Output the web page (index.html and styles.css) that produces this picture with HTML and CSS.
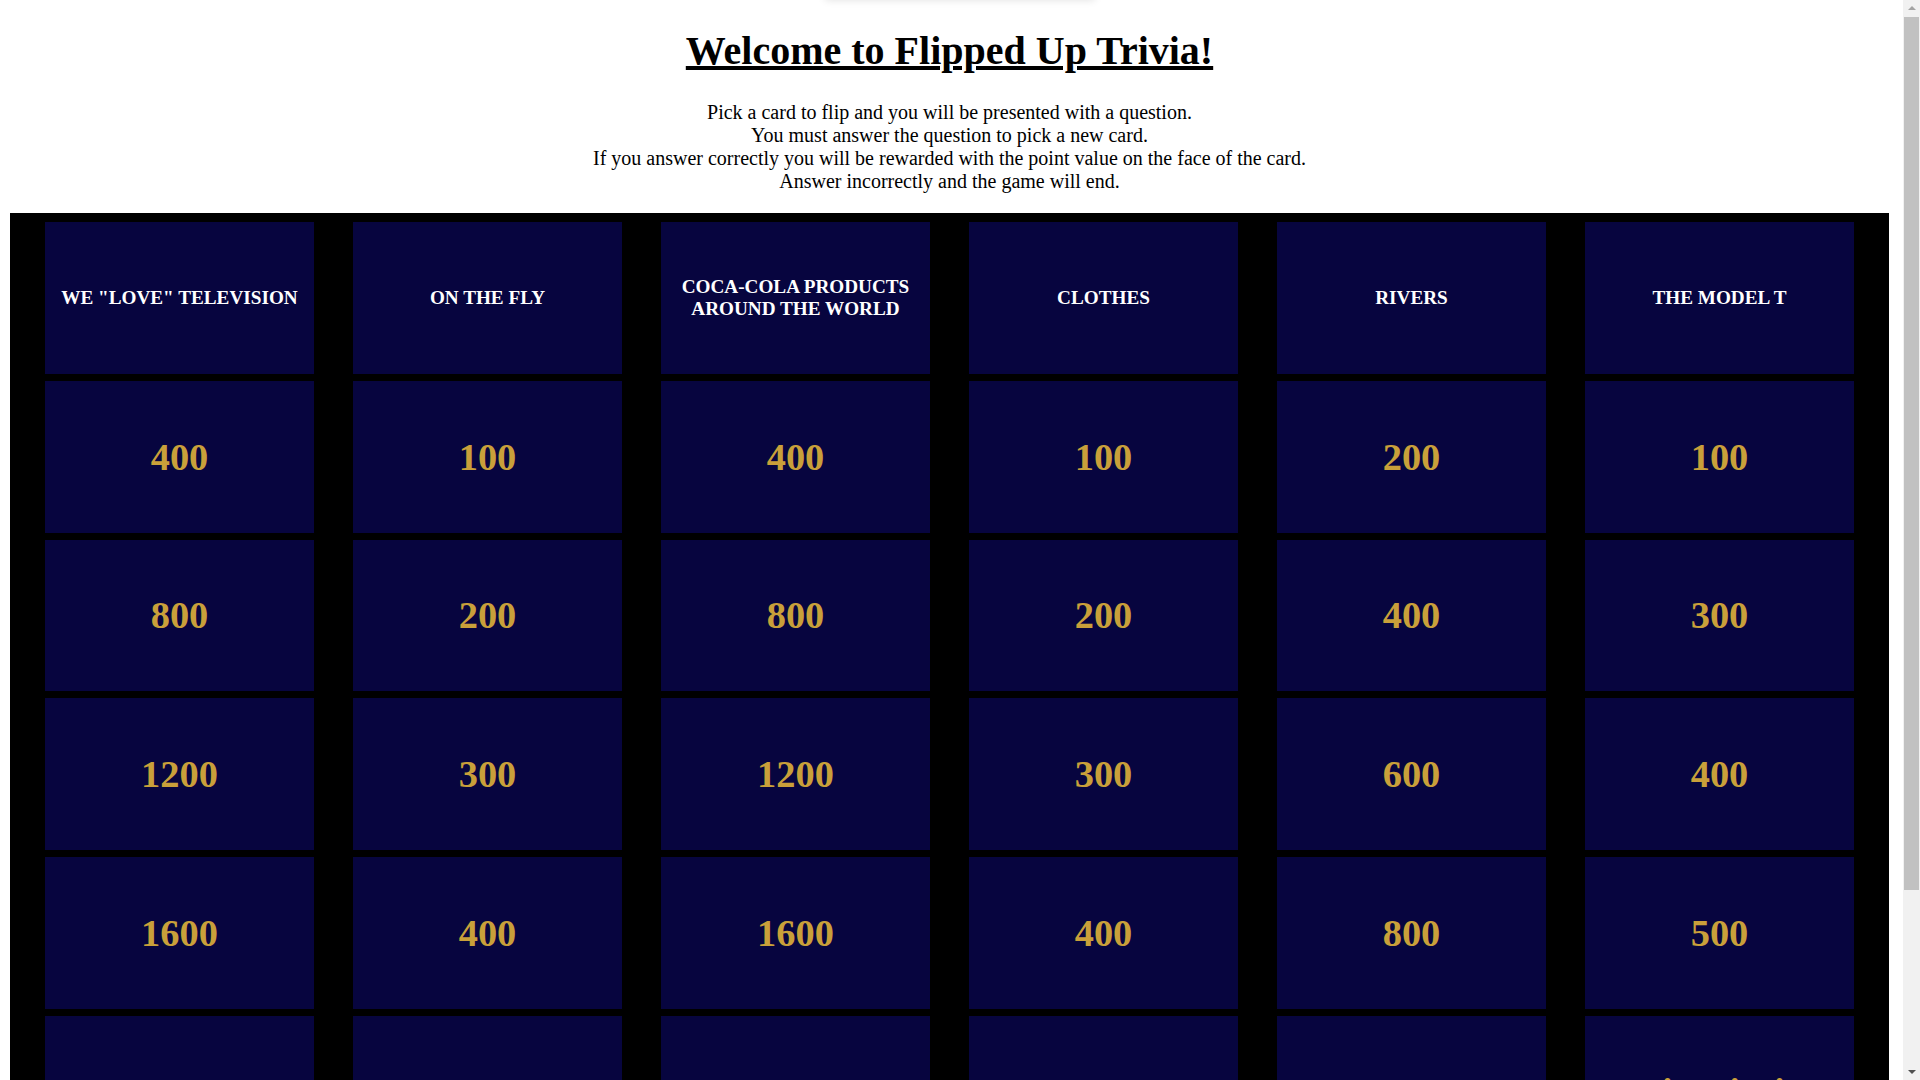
FILE: index.html
```html
<!DOCTYPE html>
<html lang="en">
<head>
<meta charset="utf-8">
<title>Flipped Up Trivia</title>
<link rel="stylesheet" href="styles.css">
</head>
<body>
<div class="modal-ghost"></div>
<div class="page">
  <h1 class="title">Welcome to Flipped Up Trivia!</h1>
  <p class="intro">Pick a card to flip and you will be presented with a question.<br>You must answer the question to pick a new card.<br>If you answer correctly you will be rewarded with the point value on the face of the card.<br>Answer incorrectly and the game will end.</p>
  <div class="board">
    <div class="card head">WE "LOVE" TELEVISION</div>
    <div class="card head">ON THE FLY</div>
    <div class="card head">COCA-COLA PRODUCTS AROUND THE WORLD</div>
    <div class="card head">CLOTHES</div>
    <div class="card head">RIVERS</div>
    <div class="card head">THE MODEL T</div>

    <div class="card value">400</div>
    <div class="card value">100</div>
    <div class="card value">400</div>
    <div class="card value">100</div>
    <div class="card value">200</div>
    <div class="card value">100</div>

    <div class="card value">800</div>
    <div class="card value">200</div>
    <div class="card value">800</div>
    <div class="card value">200</div>
    <div class="card value">400</div>
    <div class="card value">300</div>

    <div class="card value">1200</div>
    <div class="card value">300</div>
    <div class="card value">1200</div>
    <div class="card value">300</div>
    <div class="card value">600</div>
    <div class="card value">400</div>

    <div class="card value">1600</div>
    <div class="card value">400</div>
    <div class="card value">1600</div>
    <div class="card value">400</div>
    <div class="card value">800</div>
    <div class="card value">500</div>

    <div class="card value">2000</div>
    <div class="card value">500</div>
    <div class="card value">2000</div>
    <div class="card value">500</div>
    <div class="card value">1000</div>
    <div class="card value">Tin Lizzie</div>
  </div>
</div>
<div class="scrollbar">
  <div class="arrow up"></div>
  <div class="thumb"></div>
  <div class="arrow down"></div>
</div>
</body>
</html>
```
FILE: styles.css
```css
html, body {
  margin: 0;
  padding: 0;
  background: #ffffff;
}

body {
  font-family: "Liberation Serif", "Times New Roman", serif;
  color: #000000;
}

.modal-ghost {
  position: absolute;
  top: -300px;
  left: 825px;
  width: 270px;
  height: 300px;
  background: #ffffff;
  box-shadow: 0 0 8px rgba(0, 0, 0, 0.12);
}

.page {
  width: 1879px;
  margin-left: 10px;
  padding-top: 28px;
  padding-bottom: 118px;
}

.title {
  margin: 0 0 27px;
  font-size: 40px;
  line-height: 46px;
  font-weight: bold;
  text-align: center;
  text-decoration: underline;
}

.intro {
  margin: 0 0 20px;
  font-size: 20px;
  line-height: 23px;
  text-align: center;
}

.board {
  background: #000000;
  padding: 9px 35px 9px;
  display: grid;
  grid-template-columns: repeat(6, 269px);
  grid-auto-rows: 151.8px;
  column-gap: 39px;
  row-gap: 7px;
}

.card {
  background: #07053f;
  display: flex;
  align-items: center;
  justify-content: center;
  text-align: center;
  font-weight: bold;
}

.head {
  color: #ffffff;
  font-size: 19.2px;
  line-height: 22px;
  padding: 0 8px;
}

.value {
  color: #c9a03a;
  font-size: 38.4px;
  line-height: 44px;
}

.scrollbar {
  position: fixed;
  top: 0;
  right: 0;
  width: 17px;
  height: 1080px;
  background: #f1f1f1;
  display: flex;
  flex-direction: column;
  align-items: center;
}

.arrow {
  width: 0;
  height: 0;
  border-left: 4px solid transparent;
  border-right: 4px solid transparent;
  margin: 6px 0;
}

.arrow.up {
  border-bottom: 4px solid #a3a3a3;
}

.arrow.down {
  border-top: 4px solid #505050;
}

.thumb {
  width: 15px;
  height: 873px;
  margin-top: 1px;
  background: #c1c1c1;
  margin-bottom: auto;
}
```
